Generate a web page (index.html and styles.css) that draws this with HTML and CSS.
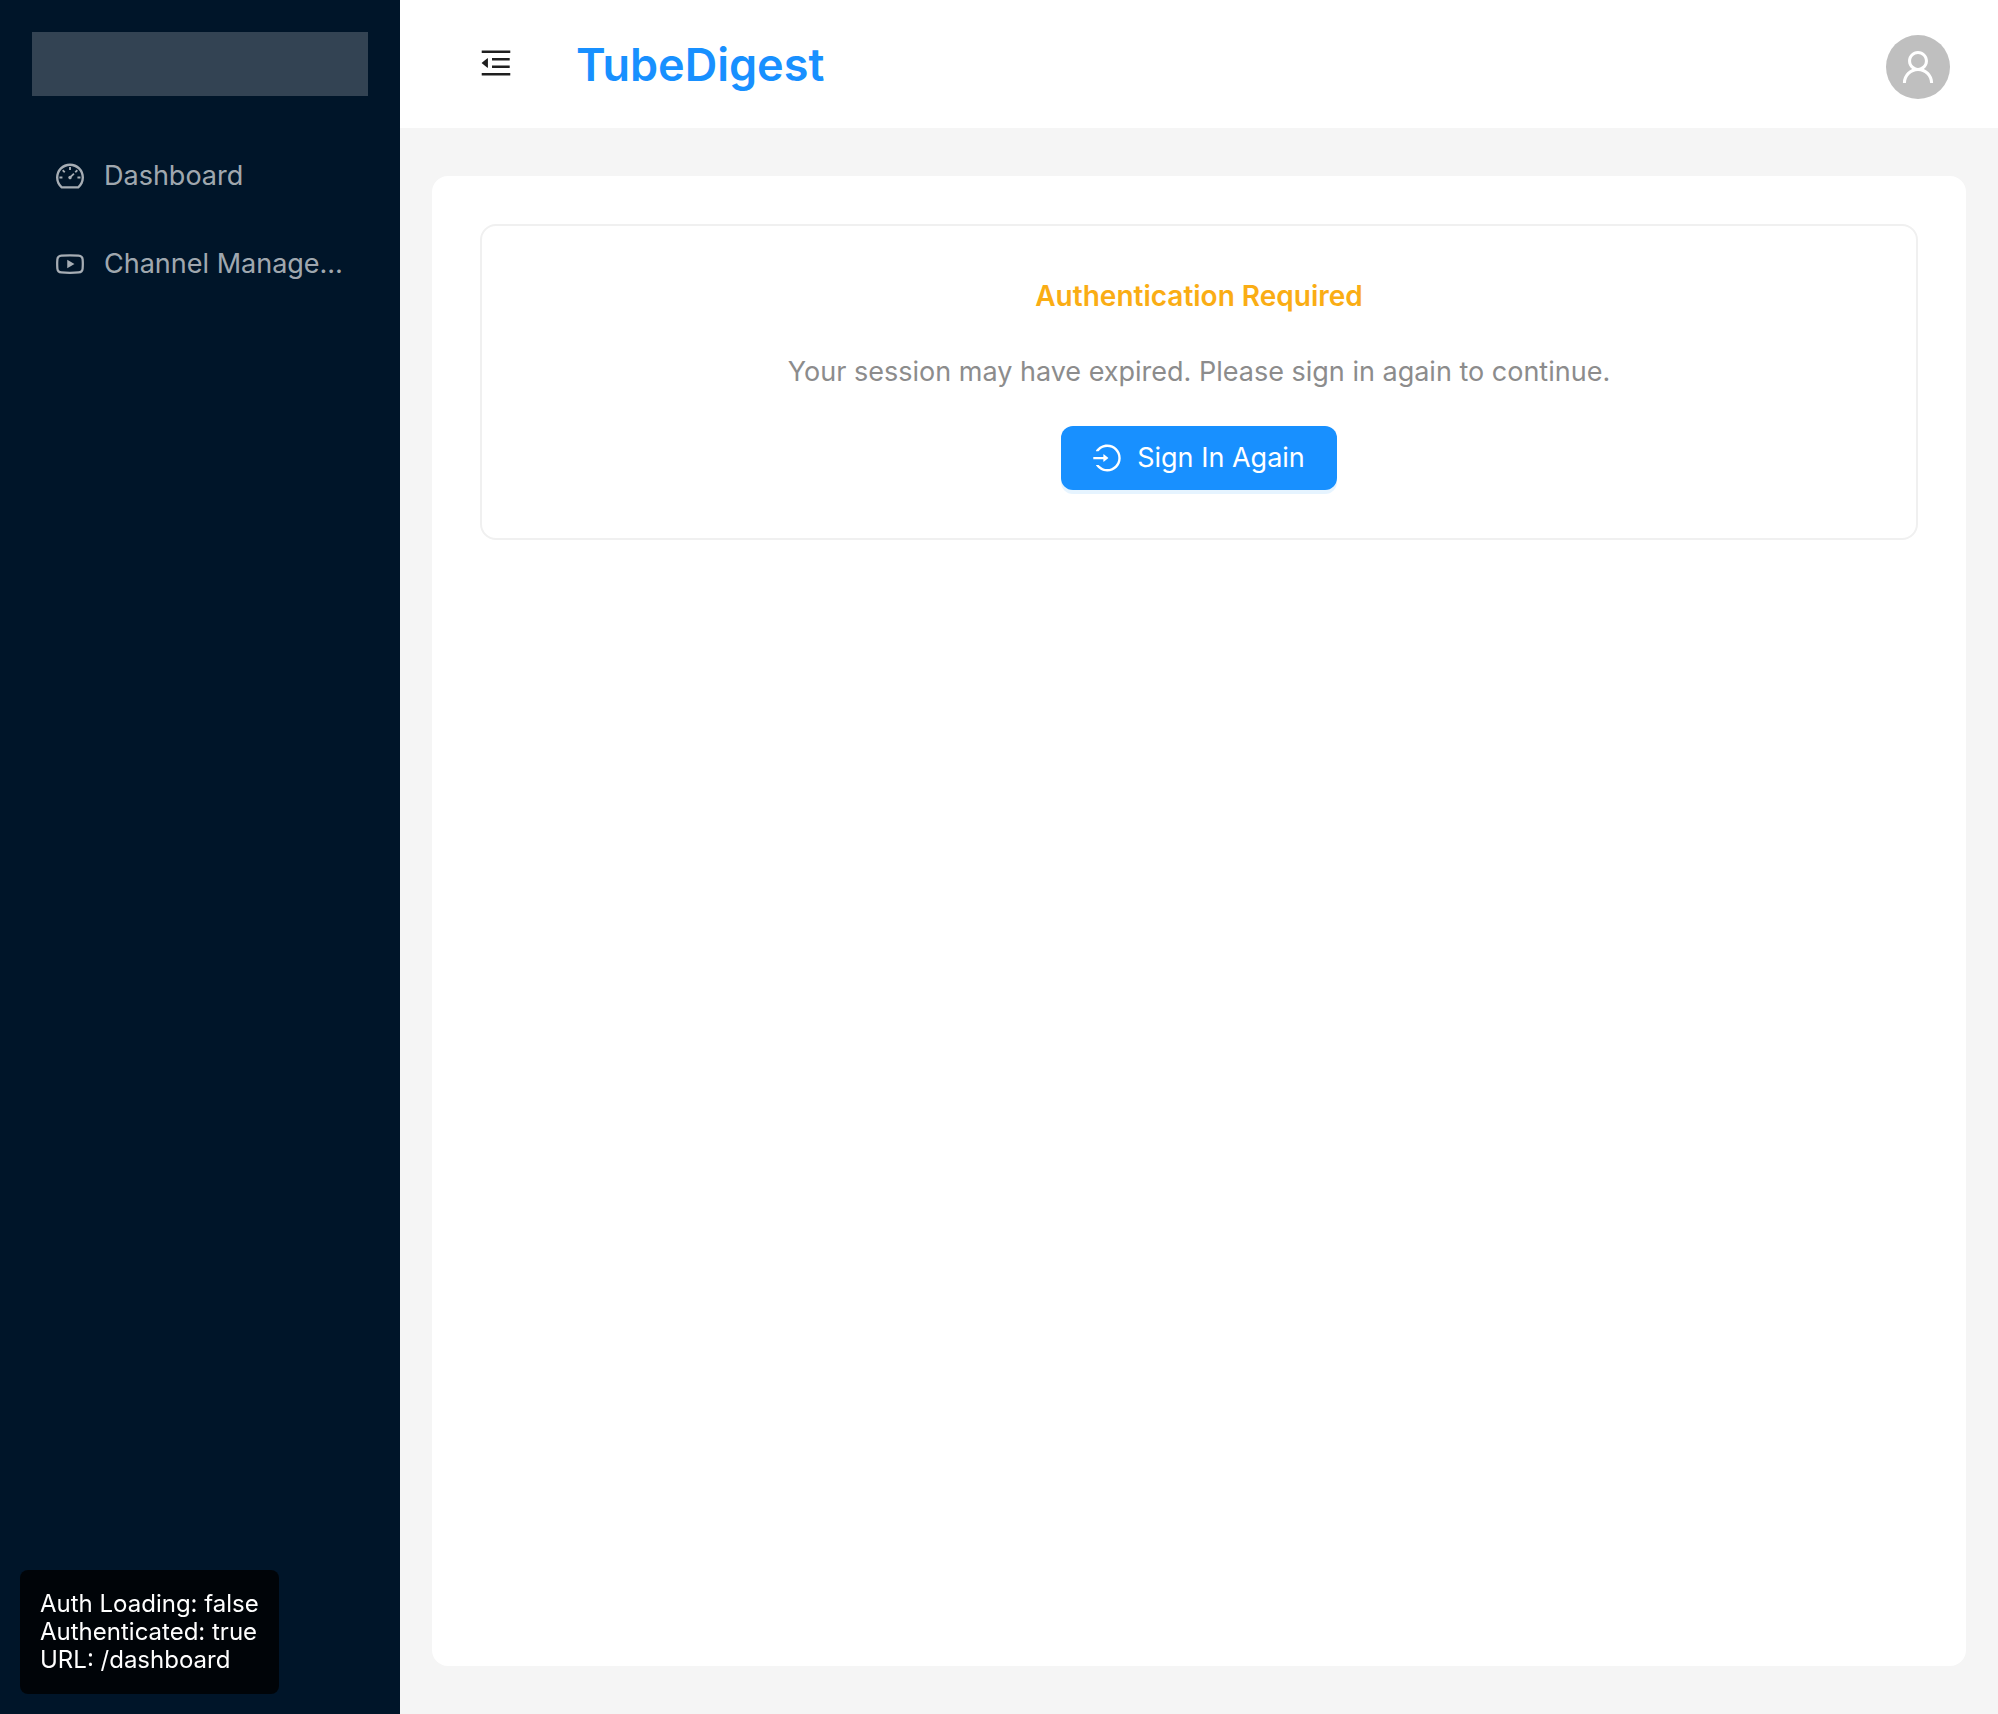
FILE: index.html
```html
<!DOCTYPE html>
<html lang="en">
<head>
<meta charset="utf-8">
<meta name="viewport" content="width=device-width, initial-scale=1">
<title>TubeDigest</title>
<link rel="stylesheet" href="styles.css">
</head>
<body>
<div class="layout">
  <aside class="sider">
    <div class="logo"></div>
    <nav class="menu">
      <a class="menu-item" href="#dashboard">
        <svg class="icon" viewBox="64 64 896 896" aria-hidden="true"><path d="M924.8 385.6a446.7 446.7 0 00-96-142.4 446.7 446.7 0 00-142.4-96C631.1 123.8 572.5 112 512 112s-119.1 11.8-174.4 35.2a446.7 446.7 0 00-142.4 96 446.7 446.7 0 00-96 142.4C75.8 440.9 64 499.5 64 560c0 132.7 58.3 257.7 159.9 343.1l1.7 1.4c5.8 4.8 13.1 7.5 20.6 7.5h531.7c7.5 0 14.8-2.7 20.6-7.5l1.7-1.4C901.7 817.7 960 692.7 960 560c0-60.5-11.9-119.1-35.2-174.4zM761.4 836H262.6A371.12 371.12 0 01140 560c0-99.4 38.7-192.8 109-263 70.3-70.3 163.7-109 263-109 99.4 0 192.8 38.7 263 109 70.3 70.3 109 163.7 109 263 0 105.6-44.5 205.5-122.6 276zM623.5 421.5a8.03 8.03 0 00-11.3 0L527.7 506c-18.7-5-39.4-.2-54.1 14.5a55.95 55.95 0 000 79.2 55.95 55.95 0 0079.2 0 55.87 55.87 0 0014.5-54.1l84.5-84.5c3.1-3.1 3.1-8.2 0-11.3l-28.3-28.3zM490 320h44c4.4 0 8-3.6 8-8v-80c0-4.4-3.6-8-8-8h-44c-4.4 0-8 3.6-8 8v80c0 4.4 3.6 8 8 8zm260 218v44c0 4.4 3.6 8 8 8h80c4.4 0 8-3.6 8-8v-44c0-4.4-3.6-8-8-8h-80c-4.4 0-8 3.6-8 8zm12.7-197.2l-31.1-31.1a8.03 8.03 0 00-11.3 0l-56.6 56.6a8.03 8.03 0 000 11.3l31.1 31.1c3.1 3.1 8.2 3.1 11.3 0l56.6-56.6c3.1-3.1 3.1-8.2 0-11.3zm-458.6-31.1a8.03 8.03 0 00-11.3 0l-31.1 31.1a8.03 8.03 0 000 11.3l56.6 56.6c3.1 3.1 8.2 3.1 11.3 0l31.1-31.1c3.1-3.1 3.1-8.2 0-11.3l-56.6-56.6zM262 530h-80c-4.4 0-8 3.6-8 8v44c0 4.4 3.6 8 8 8h80c4.4 0 8-3.6 8-8v-44c0-4.4-3.6-8-8-8z"/></svg>
        <span class="menu-label">Dashboard</span>
      </a>
      <a class="menu-item" href="#channels">
        <svg class="icon" viewBox="64 64 896 896" aria-hidden="true"><path fill="none" stroke="currentColor" stroke-width="72" d="M512 232c-110 0-210 4-274 9-66 5-124 50-130 122-8 96-8 202 0 298 6 72 64 117 130 122 64 5 164 9 274 9s210-4 274-9c66-5 124-50 130-122 8-96 8-202 0-298-6-72-64-117-130-122-64-5-164-9-274-9z"/><path d="M423 646l232-135-232-133z"/></svg>
        <span class="menu-label">Channel Management</span>
      </a>
    </nav>
  </aside>
  <div class="main">
    <header class="header">
      <button class="toggle" type="button" aria-label="Collapse menu">
        <svg class="icon icon-menu" viewBox="64 64 896 896" aria-hidden="true"><path d="M408 442h480c4.400 0 8-3.600 8-8v-56c0-4.400-3.600-8-8-8H408c-4.400 0-8 3.600-8 8v56c0 4.400 3.600 8 8 8zm-8 204c0 4.400 3.600 8 8 8h480c4.400 0 8-3.600 8-8v-56c0-4.400-3.600-8-8-8H408c-4.400 0-8 3.600-8 8v56zm504-486H120c-4.400 0-8 3.600-8 8v56c0 4.400 3.600 8 8 8h784c4.400 0 8-3.600 8-8v-56c0-4.400-3.600-8-8-8zm0 632H120c-4.400 0-8 3.600-8 8v56c0 4.400 3.600 8 8 8h784c4.400 0 8-3.600 8-8v-56c0-4.400-3.600-8-8-8zM115.400 518.900L271.700 642c5.800 4.600 14.400.5 14.400-6.900V388.900c0-7.400-8.500-11.500-14.400-6.900L115.400 505.100a8.740 8.740 0 000 13.800z"/></svg>
      </button>
      <h1 class="brand">TubeDigest</h1>
      <button class="avatar" type="button" aria-label="Account">
        <svg class="icon icon-user" viewBox="64 64 896 896" aria-hidden="true"><path d="M858.500 763.600a374 374 0 00-80.600-119.500 375.630 375.630 0 00-119.500-80.600c-.4-.2-.8-.3-1.200-.5C719.500 518 760 444.700 760 362c0-137-111-248-248-248S264 225 264 362c0 82.700 40.500 156 102.800 201.100-.4.2-.8.3-1.200.5-44.800 18.900-85 46-119.500 80.600a375.630 375.630 0 00-80.600 119.500A371.700 371.700 0 00136 901.800a8 8 0 008 8.200h60c4.400 0 7.900-3.500 8-7.800 2-77.200 33-149.500 87.800-204.300 56.700-56.700 132-87.900 212.200-87.900s155.500 31.200 212.200 87.900C779 752.700 810 825 812 902.200c.1 4.400 3.600 7.800 8 7.800h60a8 8 0 008-8.200c-1-47.800-10.900-94.300-29.500-138.200zM512 534c-45.900 0-89.100-17.900-121.600-50.400S340 407.900 340 362c0-45.900 17.900-89.100 50.400-121.600S466.100 190 512 190s89.100 17.900 121.600 50.400S684 316.100 684 362c0 45.900-17.900 89.100-50.400 121.600S557.900 534 512 534z"/></svg>
      </button>
    </header>
    <main class="content">
      <section class="card">
        <h2 class="card-title">Authentication Required</h2>
        <p class="card-text">Your session may have expired. Please sign in again to continue.</p>
        <button class="sign-in" type="button">
          <svg class="icon" viewBox="64 64 896 896" aria-hidden="true"><path d="M521.700 82c-152.500-.4-286.700 78.500-363.400 197.700-3.400 5.300.4 12.300 6.700 12.300h70.300c4.800 0 9.300-2.100 12.300-5.800 7-8.500 14.500-16.700 22.400-24.500 32.600-32.500 70.500-58.100 112.700-75.900 43.600-18.400 90-27.800 137.900-27.800 47.900 0 94.300 9.300 137.900 27.800 42.200 17.800 80.100 43.400 112.700 75.900 32.600 32.500 58.100 70.400 76 112.500C865.700 417.800 875 464.100 875 512c0 47.900-9.400 94.200-27.800 137.800-17.800 42.100-43.400 80-76 112.500s-70.500 58.100-112.700 75.900A352.800 352.800 0 01520.600 866c-47.900 0-94.300-9.400-137.900-27.800A353.840 353.840 0 01270 762.300c-7.900-7.900-15.300-16.100-22.400-24.500-3-3.700-7.600-5.800-12.300-5.800H165c-6.300 0-10.200 7-6.700 12.300C234.900 863.200 368.500 942 520.600 942c236.200 0 428-190.100 430.400-425.600C953.400 277.100 761.300 82.600 521.700 82zM395.020 624v-76h-314c-4.400 0-8-3.600-8-8v-56c0-4.400 3.600-8 8-8h314v-76c0-6.700 7.800-10.500 13-6.300l141.900 112a8 8 0 010 12.600l-141.900 112c-5.200 4.100-13 .4-13-6.300z"/></svg>
          <span>Sign In Again</span>
        </button>
      </section>
    </main>
  </div>
</div>
<div class="debug">
  <div>Auth Loading: false</div>
  <div>Authenticated: true</div>
  <div>URL: /dashboard</div>
</div>
</body>
</html>
```
FILE: styles.css
```css
* {
  box-sizing: border-box;
}

body {
  margin: 0;
  font-family: Inter, "Liberation Sans", sans-serif;
  font-size: 27px;
  line-height: 44px;
  color: rgba(0, 0, 0, 0.88);
}

button {
  font: inherit;
  border: 0;
  cursor: pointer;
}

.icon {
  flex: none;
  display: block;
  width: 28px;
  height: 28px;
  fill: currentColor;
}

.layout {
  display: flex;
  min-height: 100vh;
}

/* Sidebar */
.sider {
  flex: 0 0 400px;
  min-width: 0;
  background: #001529;
}

.logo {
  height: 64px;
  margin: 32px;
  background: rgba(255, 255, 255, 0.2);
}

.menu {
  display: flex;
  flex-direction: column;
  gap: 8px;
  padding: 8px;
}

.menu-item {
  display: flex;
  align-items: center;
  gap: 20px;
  height: 80px;
  padding: 0 48px;
  border-radius: 16px;
  color: rgba(255, 255, 255, 0.65);
  text-decoration: none;
}

.menu-label {
  min-width: 0;
  overflow: hidden;
  text-overflow: ellipsis;
  white-space: nowrap;
}

/* Header */
.main {
  flex: 1;
  min-width: 0;
  display: flex;
  flex-direction: column;
  background: #f5f5f5;
}

.header {
  display: flex;
  align-items: center;
  height: 128px;
  padding-right: 48px;
  background: #fff;
}

.toggle {
  display: flex;
  align-items: center;
  justify-content: center;
  width: 128px;
  height: 128px;
  margin: 0 16px 0 32px;
  padding: 0 0 2px;
  background: transparent;
  color: rgba(0, 0, 0, 0.88);
}

.icon-menu {
  width: 32px;
  height: 32px;
}

.brand {
  margin: 0;
  padding-top: 2px;
  font-size: 45px;
  font-weight: 600;
  line-height: 64px;
  color: #1890ff;
}

.avatar {
  display: flex;
  align-items: center;
  justify-content: center;
  width: 64px;
  height: 64px;
  margin: 6px 0 0 auto;
  padding: 0;
  border-radius: 50%;
  background: #bfbfbf;
  color: #fff;
}

.icon-user {
  width: 36px;
  height: 36px;
}

/* Content */
.content {
  flex: 1;
  margin: 48px 32px;
  padding: 48px;
  border-radius: 16px;
  background: #fff;
}

.card {
  display: flex;
  flex-direction: column;
  align-items: center;
  padding: 48px;
  border: 2px solid #f0f0f0;
  border-radius: 16px;
  text-align: center;
}

.card-title {
  margin: 0 0 32px;
  font-size: 28px;
  font-weight: 600;
  line-height: 44px;
  color: #faad14;
}

.card-text {
  margin: 0 0 32px;
  color: #8c8c8c;
}

.sign-in {
  display: flex;
  align-items: center;
  gap: 16px;
  height: 64px;
  padding: 0 32px;
  border-radius: 12px;
  background: #1890ff;
  box-shadow: 0 4px 0 rgba(5, 145, 255, 0.1);
  color: #fff;
}

/* Status overlay */
.debug {
  position: fixed;
  left: 20px;
  bottom: 20px;
  padding: 20px;
  border-radius: 8px;
  background: rgba(0, 0, 0, 0.8);
  font-size: 24px;
  line-height: 28px;
  color: #fff;
}
```
